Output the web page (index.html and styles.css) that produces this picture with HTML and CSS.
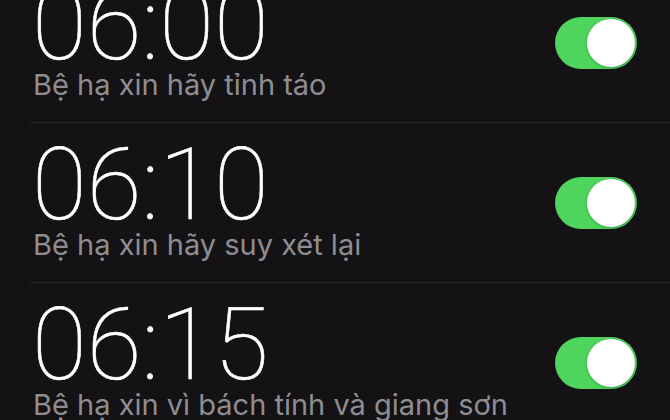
FILE: index.html
```html
<!DOCTYPE html>
<html>
<head>
<meta charset="utf-8">
<link rel="stylesheet" href="styles.css">
</head>
<body>
<div class="list">
  <div class="row">
    <div class="info">
      <div class="time">06:00</div>
      <div class="label">Bệ hạ xin hãy tỉnh táo</div>
    </div>
    <div class="toggle"><span class="knob"></span></div>
  </div>
  <div class="row">
    <div class="info">
      <div class="time">06:10</div>
      <div class="label">Bệ hạ xin hãy suy xét lại</div>
    </div>
    <div class="toggle"><span class="knob"></span></div>
  </div>
  <div class="row">
    <div class="info">
      <div class="time">06:15</div>
      <div class="label">Bệ hạ xin vì bách tính và giang sơn</div>
    </div>
    <div class="toggle"><span class="knob"></span></div>
  </div>
</div>
</body>
</html>
```

FILE: styles.css
```css
html, body {
  margin: 0;
  padding: 0;
  background: #141214;
  height: 100%;
  overflow: hidden;
}
.list {
  margin-top: -37px;
  padding-left: 30px;
}
.row {
  height: 159px;
  border-bottom: 1px solid #29272a;
  display: flex;
  align-items: center;
  justify-content: space-between;
  padding-right: 33px;
}
.info {
  align-self: flex-start;
  padding-top: 20px;
  padding-left: 2px;
  display: flex;
  flex-direction: column;
}
.time {
  font-family: "Roboto", sans-serif;
  font-weight: 100;
  font-size: 100px;
  line-height: 84px;
  color: #ffffff;
  -webkit-text-stroke: 0.6px #ffffff;
}
.label {
  margin-top: 1px;
  padding-left: 1px;
  font-family: "Inter", "Roboto", sans-serif;
  font-size: 29px;
  line-height: 34px;
  color: #8e8d92;
}
.toggle {
  width: 82px;
  height: 52px;
  border-radius: 26px;
  background: #4fd45e;
  display: flex;
  align-items: center;
  justify-content: flex-end;
  padding-right: 2px;
  box-sizing: border-box;
}
.knob {
  width: 48px;
  height: 48px;
  border-radius: 50%;
  background: #ffffff;
  box-shadow: 0 1px 3px rgba(0,0,0,0.25);
}
```
